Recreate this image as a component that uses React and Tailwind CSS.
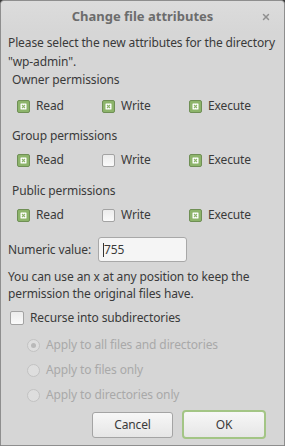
import { X } from "lucide-react";

function Check({ checked }) {
  if (!checked) {
    return (
      <span className="w-[13px] h-[13px] rounded-[2px] border border-[#a3a3a3] bg-gradient-to-b from-[#ececec] to-[#fafafa] shrink-0" />
    );
  }
  return (
    <span className="flex items-center justify-center w-[13px] h-[13px] rounded-[2px] border border-[#6f8f55] bg-[#8db46b] shrink-0">
      <svg width="7" height="7" viewBox="0 0 7 7">
        <rect x="0.5" y="0.5" width="6" height="6" fill="#ffffff" rx="0.5" />
        <path d="M2 2 L5 5 M5 2 L2 5" stroke="#8db46b" strokeWidth="1.1" />
      </svg>
    </span>
  );
}

function PermRow({ read, write, exec }) {
  const items = [
    ["Read", read, "w-[85px]"],
    ["Write", write, "w-[87px]"],
    ["Execute", exec, ""],
  ];
  return (
    <div className="flex pl-[9px] h-[18px] items-center">
      {items.map(([label, on, w]) => (
        <div key={label} className={`flex items-center gap-[6px] ${w}`}>
          <Check checked={on} />
          <span>{label}</span>
        </div>
      ))}
    </div>
  );
}

function Radio({ selected, label }) {
  return (
    <div className="flex items-center h-[18px] pl-[19px] gap-[6px] text-[#a9a9a9]">
      <span className="flex items-center justify-center w-[13px] h-[13px] rounded-full border border-[#c2c2c2] bg-[#dedede]">
        {selected && <span className="w-[5px] h-[5px] rounded-full bg-[#b9b9b9]" />}
      </span>
      <span>{label}</span>
    </div>
  );
}

export default function App() {
  return (
    <div
      className="w-[285px] h-[446px] bg-[#3b3b3b] text-[12px] tracking-[-0.12px] text-[#3a3a3a]"
      style={{ fontFamily: '"Noto Sans", "Open Sans", sans-serif' }}
    >
      <div className="flex flex-col w-full h-full rounded-t-[4px] border border-[#8e8e8e] bg-[#d6d6d6]">
        {/* title bar */}
        <div className="relative flex items-center justify-center h-[31px] rounded-t-[4px] bg-gradient-to-b from-[#dcdcdc] to-[#d6d6d6]">
          <span className="font-bold text-[13px] tracking-normal text-[#6c6c6c]">Change file attributes</span>
          <X className="absolute right-[13px] top-[11px] w-[10px] h-[10px] text-[#8f8f8f]" strokeWidth={3.5} />
        </div>

        <div className="flex flex-col px-[7px] leading-[18px]">
          <p className="pt-[1px] mr-[-6px] leading-[19px]">
            Please select the new attributes for the directory "wp-admin".
          </p>

          <div className="pl-[4px] mt-[0px]">Owner permissions</div>
          <div className="mt-[8px]">
            <PermRow read write exec />
          </div>

          <div className="pl-[4px] mt-[12px]">Group permissions</div>
          <div className="mt-[6px]">
            <PermRow read exec />
          </div>

          <div className="pl-[4px] mt-[13px]">Public permissions</div>
          <div className="mt-[6px]">
            <PermRow read exec />
          </div>

          <div className="flex items-center gap-[7px] mt-[13px]">
            <span>Numeric value:</span>
            <div className="flex items-center w-[89px] h-[25px] px-[4px] rounded-[3px] border border-[#a8a8a8] bg-[#f5f5f5]">
              <span className="w-px h-[14px] bg-[#333]" />
              <span>755</span>
            </div>
          </div>

          <p className="mt-[6px] leading-[17px] mr-[-4px]">
            You can use an x at any position to keep the permission the original files have.
          </p>

          <div className="flex items-center gap-[6px] pl-[2px] h-[18px] mt-[7px]">
            <span className="w-[14px] h-[14px] rounded-[2px] border border-[#a3a3a3] bg-gradient-to-b from-[#ececec] to-[#fafafa]" />
            <span>Recurse into subdirectories</span>
          </div>

          <div className="flex flex-col gap-[7px] mt-[9px]">
            <Radio selected label="Apply to all files and directories" />
            <Radio label="Apply to files only" />
            <Radio label="Apply to directories only" />
          </div>

          <div className="flex justify-end items-center gap-[9px] mt-[6px] pr-[11px]">
            <button className="w-[81px] h-[26px] rounded-[3px] border border-[#a4a4a4] bg-gradient-to-b from-[#f7f7f7] to-[#e6e6e6] text-[#3a3a3a]">
              Cancel
            </button>
            <button className="w-[84px] h-[29px] rounded-[4px] border-2 border-[#a3c585] bg-gradient-to-b from-[#f7f7f7] to-[#e6e6e6] text-[#3a3a3a]">
              OK
            </button>
          </div>
        </div>
      </div>
    </div>
  );
}
